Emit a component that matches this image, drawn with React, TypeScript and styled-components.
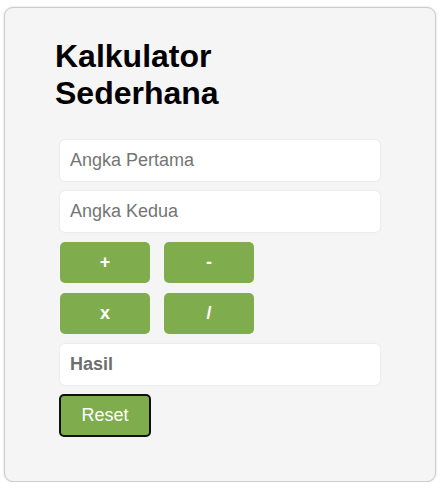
import React, { useState } from 'react';
import styled, { createGlobalStyle } from 'styled-components';

const GlobalStyle = createGlobalStyle`
  body {
    margin: 0;
    background: #ffffff;
    font-family: "Liberation Sans", Arial, sans-serif;
  }
`;

const Card = styled.div`
  box-sizing: border-box;
  width: 432px;
  height: 475px;
  margin: 7px 0 0 4px;
  padding: 30px 50px;
  background: #f5f5f5;
  border: 1px solid #cccccc;
  border-radius: 9px;
  box-shadow: 0 0 2px rgba(0, 0, 0, 0.2);
`;

const Title = styled.h1`
  margin: 0 0 28px;
  width: 300px;
  font-size: 32px;
  font-weight: bold;
  color: #000;
`;

const Form = styled.div`
  display: flex;
  flex-direction: column;
  gap: 10px;
  padding-left: 5px;
`;

const Field = styled.input`
  box-sizing: border-box;
  width: 320px;
  height: 41px;
  padding: 0 10px;
  border: none;
  border-radius: 5px;
  background: #fff;
  box-shadow: 0 0 2px rgba(0, 0, 0, 0.12);
  font-family: inherit;
  font-size: 18px;
  color: #333;
  outline: none;

  &::placeholder {
    color: #757575;
  }
`;

const Result = styled.div`
  box-sizing: border-box;
  width: 320px;
  height: 41px;
  padding: 0 10px;
  display: flex;
  align-items: center;
  border-radius: 5px;
  background: #fff;
  box-shadow: 0 0 2px rgba(0, 0, 0, 0.12);
  font-size: 18px;
  font-weight: bold;
  color: #6e6e6e;
`;

const OpRow = styled.div`
  display: flex;
  gap: 14px;
`;

const OpButton = styled.button`
  width: 90px;
  height: 41px;
  border: none;
  border-radius: 5px;
  background: #7fad4d;
  color: #fff;
  font-family: inherit;
  font-size: 18px;
  font-weight: bold;
  cursor: pointer;
`;

const ResetButton = styled.button`
  box-sizing: border-box;
  width: 92px;
  height: 43px;
  margin: -1px 0 0 -1px;
  border: 2px solid #111;
  border-radius: 5px;
  background: #7fad4d;
  color: #fff;
  font-family: inherit;
  font-size: 18px;
  cursor: pointer;
`;

export default function App() {
  const [a, setA] = useState('');
  const [b, setB] = useState('');
  const [hasil, setHasil] = useState<string | null>(null);

  const hitung = (op: string) => {
    const x = parseFloat(a);
    const y = parseFloat(b);
    if (isNaN(x) || isNaN(y)) return;
    let r = 0;
    if (op === '+') r = x + y;
    if (op === '-') r = x - y;
    if (op === 'x') r = x * y;
    if (op === '/') r = x / y;
    setHasil(String(r));
  };

  const reset = () => {
    setA('');
    setB('');
    setHasil(null);
  };

  return (
    <>
      <GlobalStyle />
      <Card>
        <Title>Kalkulator Sederhana</Title>
        <Form>
          <Field placeholder="Angka Pertama" value={a} onChange={(e) => setA(e.target.value)} />
          <Field placeholder="Angka Kedua" value={b} onChange={(e) => setB(e.target.value)} />
          <OpRow>
            <OpButton onClick={() => hitung('+')}>+</OpButton>
            <OpButton onClick={() => hitung('-')}>-</OpButton>
          </OpRow>
          <OpRow>
            <OpButton onClick={() => hitung('x')}>x</OpButton>
            <OpButton onClick={() => hitung('/')}>/</OpButton>
          </OpRow>
          <Result>{hasil === null ? 'Hasil' : hasil}</Result>
          <div>
            <ResetButton onClick={reset}>Reset</ResetButton>
          </div>
        </Form>
      </Card>
    </>
  );
}
